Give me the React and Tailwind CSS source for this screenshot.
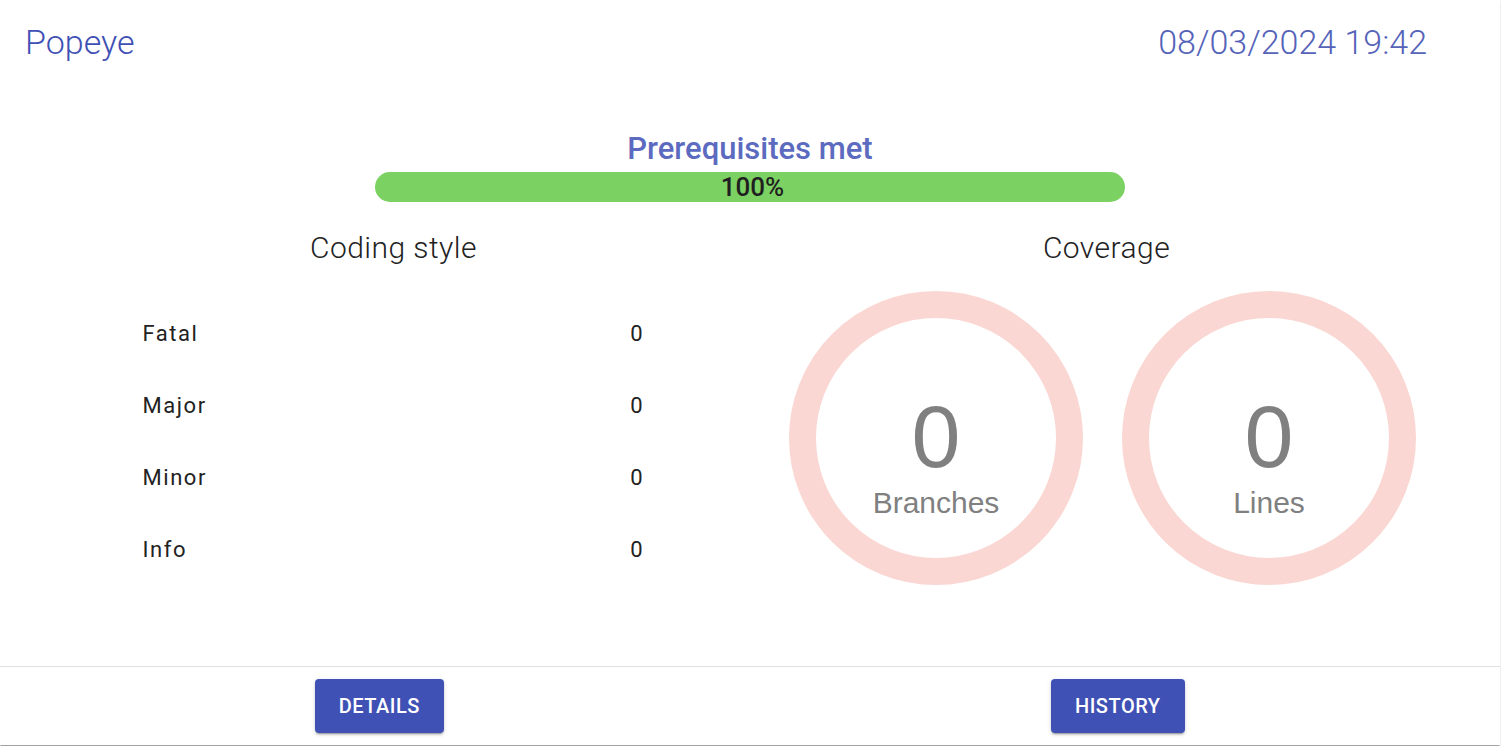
export default function App() {
  const rows = [
    ['Fatal', 0],
    ['Major', 0],
    ['Minor', 0],
    ['Info', 0],
  ]
  const coverage = [
    ['Branches', 0],
    ['Lines', 0],
  ]

  return (
    <div className="w-[1501px] h-[746px] bg-white" style={{ fontFamily: 'Roboto, "Noto Sans", sans-serif' }}>
      <div className="w-[1500px] h-[745px] bg-white flex flex-col shadow-[0px_2px_1px_-1px_rgba(0,0,0,0.2),0px_1px_1px_0px_rgba(0,0,0,0.14),0px_1px_3px_0px_rgba(0,0,0,0.12)]">

        {/* Header */}
        <div className="flex items-start justify-between pt-[22px] pl-[25px] pr-[73px]">
          <div className="text-[34px] leading-[40px] font-light text-[#3f51b5]">Popeye</div>
          <div className="text-[34px] leading-[40px] font-light text-[#5563b9]">08/03/2024 19:42</div>
        </div>

        {/* Prerequisites */}
        <div className="mt-[71px] flex flex-col items-center">
          <div className="text-[31px] leading-[32px] font-medium text-[#5c6bc0]">Prerequisites met</div>
          <div className="mt-[7px] w-[750px] h-[30px] rounded-full bg-[#7bd162] flex items-center justify-center">
            <span className="ml-[5px] text-[26px] leading-[30px] font-medium text-[#1f1f1f]">100%</span>
          </div>
        </div>

        {/* Columns */}
        <div className="flex-1 mt-[31px] grid grid-cols-2 px-[37px]">
          <div className="flex flex-col items-center">
            <div className="text-[30px] leading-[30px] font-light tracking-[0.015em] text-[#222]">Coding style</div>
            <div className="mt-[35px] w-[500px] flex flex-col">
              {rows.map(([label, value]) => (
                <div key={label} className="h-[72px] flex items-center justify-between text-[22px] leading-[26px] text-[#222]">
                  <span className="tracking-[0.07em] -ml-[1px]">{label}</span>
                  <span className="mr-[1px]">{value}</span>
                </div>
              ))}
            </div>
          </div>

          <div className="flex flex-col items-center">
            <div className="text-[30px] leading-[30px] font-light tracking-[0.015em] text-[#222]">Coverage</div>
            <div className="mt-[28px] w-full flex justify-center gap-[39px] pr-[8px]">
              {coverage.map(([label, value]) => (
                <div key={label}
                  className="w-[294px] h-[294px] rounded-full border-[27px] border-[#fad7d2] flex flex-col items-center pt-[75px] text-[#808080]"
                  style={{ fontFamily: '"Liberation Sans", Arial, sans-serif' }}>
                  <div className="text-[88px] leading-[88px]">{value}</div>
                  <div className="mt-[4px] text-[30px] leading-[36px]">{label}</div>
                </div>
              ))}
            </div>
          </div>
        </div>

        {/* Actions */}
        <div className="h-[79px] border-t border-[#e0e0e0] grid grid-cols-2 pl-[10px] pr-[13px] pt-[12px]">
          {['Details', 'History'].map(b => (
            <div key={b} className="flex justify-center">
              <button className="h-[54px] px-[24px] rounded-[4px] bg-[#3f51b5] text-white text-[20px] font-medium uppercase tracking-[0.025em] shadow-[0px_3px_1px_-2px_rgba(0,0,0,0.2),0px_2px_2px_0px_rgba(0,0,0,0.14),0px_1px_5px_0px_rgba(0,0,0,0.12)]">
                {b}
              </button>
            </div>
          ))}
        </div>
      </div>
    </div>
  )
}
